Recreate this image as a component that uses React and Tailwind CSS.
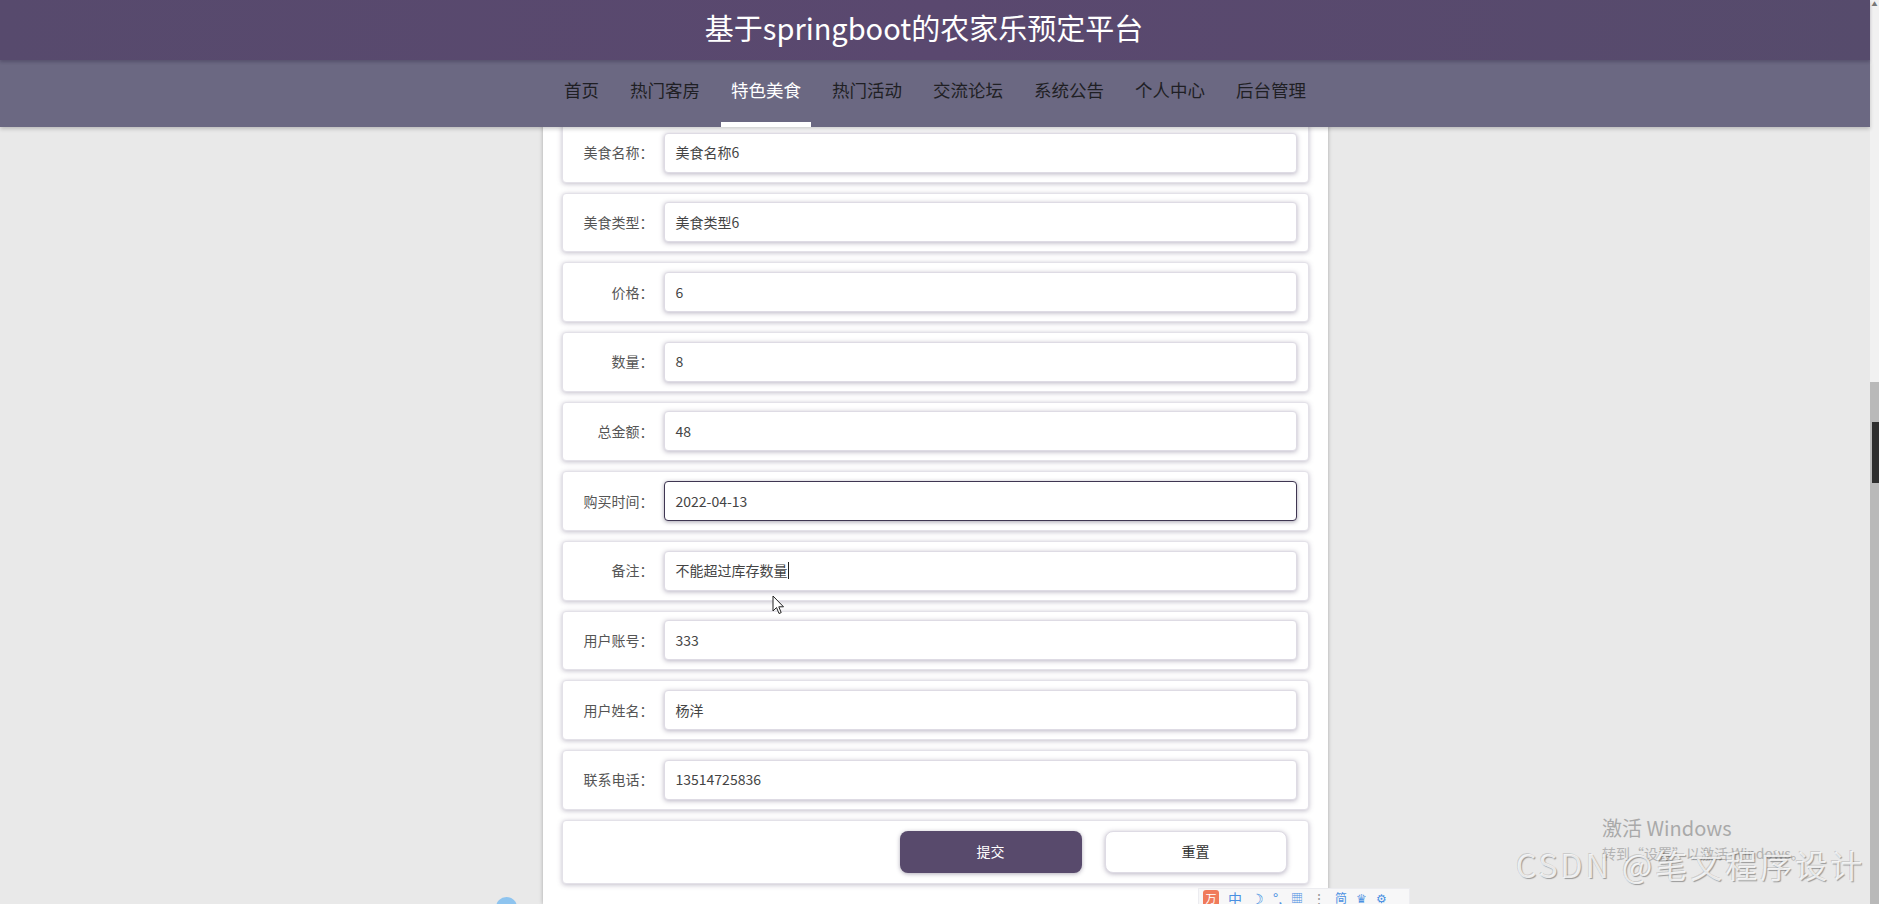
import React from 'react';

const navItems = ['首页', '热门客房', '特色美食', '热门活动', '交流论坛', '系统公告', '个人中心', '后台管理'];

const fields = [
  { label: '美食名称', value: '美食名称6' },
  { label: '美食类型', value: '美食类型6' },
  { label: '价格', value: '6' },
  { label: '数量', value: '8' },
  { label: '总金额', value: '48' },
  { label: '购买时间', value: '2022-04-13', focused: true },
  { label: '备注', value: '不能超过库存数量', caret: true },
  { label: '用户账号', value: '333' },
  { label: '用户姓名', value: '杨洋' },
  { label: '联系电话', value: '13514725836' },
];

function FormRow({ label, value, focused, caret }) {
  return (
    <div className="h-[59.67px] flex items-center bg-white border border-[#e3e1e8] rounded-[4px] shadow-[0_1px_5px_rgba(80,68,104,0.35)]">
      <div className="w-[91px] shrink-0 text-right text-[14px] text-[#555]">{label}：</div>
      <div
        className={`ml-[10px] mr-[11px] flex-1 h-[40px] flex items-center px-[11px] rounded-[4px] bg-white text-[14px] text-[#444] border ${
          focused
            ? 'border-[#3f3652] shadow-[0_1px_4px_rgba(60,50,80,0.45)]'
            : 'border-[#dedbe4] shadow-[0_1px_5px_rgba(80,68,104,0.4)]'
        }`}
      >
        <span>{value}</span>
        {caret && <span className="inline-block w-px h-[17px] bg-[#222]" />}
      </div>
    </div>
  );
}

export default function App() {
  return (
    <div className="h-[904px] w-full overflow-hidden flex bg-[#e9e9e9] font-['Noto_Sans_CJK_SC','Liberation_Sans',sans-serif]">
      <div className="relative flex-1 flex flex-col">
        <header className="relative z-10">
          <div className="h-[60px] flex items-center justify-center pr-[22px] pb-[4px] bg-gradient-to-r from-[#574a6d] via-[#5a486f] to-[#564b6c] text-white text-[29px] shadow-[0_2px_3px_rgba(40,30,60,0.3)] relative z-10">
            基于springboot的农家乐预定平台
          </div>
          <nav className="h-[67px] flex justify-center gap-[11px] bg-[#6b6882] shadow-[0_2px_4px_rgba(0,0,0,0.2)]">
            {navItems.map((item) => {
              const active = item === '特色美食';
              return (
                <div
                  key={item}
                  className={`relative h-full px-[10px] pb-[6px] flex items-center text-[17.5px] ${
                    active ? 'text-white' : 'text-[#1f1f24]'
                  }`}
                >
                  {item}
                  {active && <div className="absolute left-0 right-0 bottom-0 h-[5px] bg-white" />}
                </div>
              );
            })}
          </nav>
        </header>

        <main className="w-[785px] mx-auto flex-1 -mt-[4px] px-[19px] bg-white shadow-[0_0_4px_rgba(0,0,0,0.28)]">
          <div className="flex flex-col gap-[10px]">
            {fields.map((f) => (
              <FormRow key={f.label} {...f} />
            ))}
            <div className="h-[64px] flex items-center justify-end gap-[23px] pr-[21px] bg-white border border-[#e3e1e8] rounded-[4px] shadow-[0_1px_5px_rgba(80,68,104,0.35)]">
              <button className="w-[182px] h-[42px] rounded-[8px] bg-[#584a6c] text-white text-[14px] shadow-[0_1px_4px_rgba(60,50,80,0.4)]">
                提交
              </button>
              <button className="w-[182px] h-[42px] rounded-[8px] bg-white border border-[#dedbe4] text-[#333] text-[14px] shadow-[0_1px_5px_rgba(80,68,104,0.4)]">
                重置
              </button>
            </div>
          </div>
        </main>

        {/* mouse pointer */}
        <svg className="absolute left-[772px] top-[595px] z-20" width="13" height="20" viewBox="0 0 13 20">
          <path d="M1 1 L1 16 L4.5 12.5 L7 18.5 L9.2 17.6 L6.8 11.8 L11.5 11.8 Z" fill="#fff" stroke="#222" strokeWidth="1" strokeLinejoin="round" />
        </svg>

        {/* small blue bubble at bottom */}
        <div className="absolute left-[496px] top-[897px] w-[21px] h-[21px] rounded-full bg-[#8ec4ef]" />

        {/* IME toolbar */}
        <div className="absolute left-[1198px] top-[888px] w-[212px] h-[20px] bg-[#f7f7f8] border border-[#ececf0] flex items-center gap-[9px] px-[4px] text-[14px] leading-none text-[#4a90e2]">
          <span className="w-[16px] h-[16px] rounded-[3px] bg-[#f07a5a] text-white text-[11px] flex items-center justify-center">万</span>
          <span>中</span>
          <span className="text-[#3b8de0]">☽</span>
          <span>°,</span>
          <span className="text-[12px]">▦</span>
          <span className="text-[#999]">⋮</span>
          <span className="text-[12px]">简</span>
          <span className="text-[12px]">♛</span>
          <span className="text-[12px]">⚙</span>
        </div>

        {/* Windows activation watermark */}
        <div className="absolute left-[1602px] top-[815px] text-[20px] text-[#a9a9a9] leading-tight pointer-events-none">
          激活 Windows
        </div>
        <div className="absolute left-[1602px] top-[845px] text-[14px] text-[#b3b3b3] leading-tight pointer-events-none">
          转到“设置”以激活 Windows。
        </div>

        {/* CSDN watermark */}
        <div className="absolute left-[1516px] top-[848px] text-[32px] leading-none tracking-[3px] text-white/80 [text-shadow:1px_1px_1px_rgba(0,0,0,0.35),-1px_-1px_0_rgba(0,0,0,0.12)] pointer-events-none whitespace-nowrap">
          CSDN @笔文程序设计
        </div>
      </div>

      {/* scrollbar */}
      <div className="w-[9px] flex flex-col">
        <div className="h-[382px] bg-[#f1f1f1] flex justify-center pt-[1px] text-[6px] text-[#777] leading-none">▲</div>
        <div className="flex-1 bg-[#b9b9b9] pl-[2px] pt-[40px]">
          <div className="h-[61px] bg-[#2f2f2f]" />
        </div>
      </div>
    </div>
  );
}
